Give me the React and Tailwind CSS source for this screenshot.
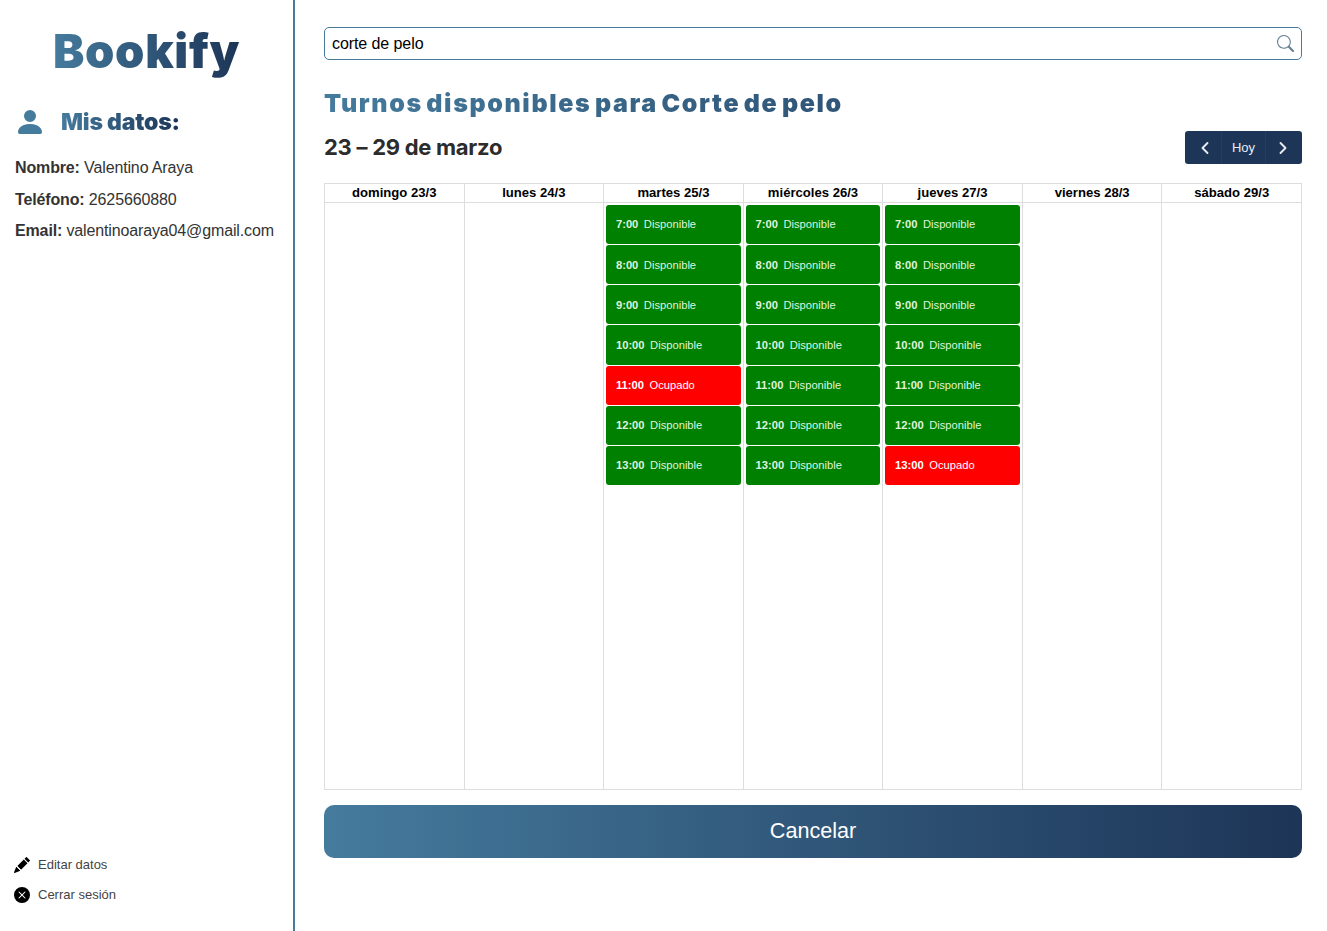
import { BsPersonFill, BsPencilFill, BsXCircleFill, BsSearch } from "react-icons/bs";
import { ChevronLeft, ChevronRight } from "lucide-react";

const DAYS = [
  { label: "domingo 23/3", slots: [] },
  { label: "lunes 24/3", slots: [] },
  { label: "martes 25/3", slots: [11] },
  { label: "miércoles 26/3", slots: [] },
  { label: "jueves 27/3", slots: [13] },
  { label: "viernes 28/3", slots: [] },
  { label: "sábado 29/3", slots: [] },
];
const OPEN_DAYS = ["martes 25/3", "miércoles 26/3", "jueves 27/3"];
const HOURS = [7, 8, 9, 10, 11, 12, 13];

const gradient = "bg-gradient-to-r from-[#457b9d] to-[#1d3557]";
const gradientText = `${gradient} bg-clip-text text-transparent`;

export default function App() {
  return (
    <div className="flex h-[931px] overflow-hidden bg-white font-['Liberation_Sans',sans-serif] text-[#333333]">
      <Sidebar />
      <main className="flex-1 pl-[29px] pr-[25px] pt-[27px]">
        <div className="flex h-[33px] items-center justify-between rounded-[5px] border border-[#457b9d] pl-[7px] pr-[7px]">
          <span className="text-[16px] tracking-[-0.08px] text-black">corte de pelo</span>
          <BsSearch className="h-[17px] w-[17px] text-[#64808f]" />
        </div>

        <h2 className={`mt-[26px] h-[34px] font-['Inter',sans-serif] text-[25px] font-black leading-[34px] tracking-[1.63px] [word-spacing:-3px] ${gradientText}`}>
          Turnos disponibles para Corte de pelo
        </h2>

        <div className="mt-[11px] flex h-[33px] items-center justify-between">
          <h3 className="font-['Inter',sans-serif] text-[22px] font-bold tracking-[-0.27px] text-[#2c2c2c]">
            23 – 29 de marzo
          </h3>
          <div className="flex h-[33px] w-[117px] items-center rounded-[3px] bg-[#1d3557] text-[13px] text-[#e8edf3]">
            <button className="flex h-full w-[37px] items-center justify-center border-r border-[#24405f] pl-[3px]">
              <ChevronLeft className="h-[20px] w-[20px]" strokeWidth={2.25} />
            </button>
            <button className="flex h-full flex-1 items-center justify-center border-r border-[#24405f]">
              Hoy
            </button>
            <button className="flex h-full w-[36px] items-center justify-center pr-[2px]">
              <ChevronRight className="h-[20px] w-[20px]" strokeWidth={2.25} />
            </button>
          </div>
        </div>

        <Calendar />

        <button className={`mt-[15px] h-[53px] w-full rounded-[10px] pb-px text-[21.6px] text-white ${gradient}`}>
          Cancelar
        </button>
      </main>
    </div>
  );
}

function Sidebar() {
  return (
    <aside className="flex w-[295px] shrink-0 flex-col justify-between border-r-2 border-[#457b9d] pb-[28px] pl-[15px] pr-[15px] pt-[21px]">
      <div>
        <div className="text-center">
          <h1 className={`inline-block font-['Inter',sans-serif] text-[47px] font-black leading-[60px] tracking-[0.7px] ${gradientText}`}>
            Bookify
          </h1>
        </div>
        <div className="mt-[23px] flex h-[36px] items-center">
          <BsPersonFill className="ml-[-1px] h-[32px] w-[32px] text-[#457b9d]" />
          <h2 className={`ml-[15px] inline-block font-['Inter',sans-serif] text-[23px] font-black tracking-[-0.2px] ${gradientText}`}>
            Mis datos:
          </h2>
        </div>
        <div className="mt-[19px] flex flex-col gap-[13px] text-[16px] leading-[18.5px] tracking-[-0.14px]">
          <p><b>Nombre:</b> Valentino Araya</p>
          <p><b>Teléfono:</b> 2625660880</p>
          <p><b>Email:</b> valentinoaraya04@gmail.com</p>
        </div>
      </div>
      <div className="ml-[-1px] flex flex-col gap-[14px] text-[13px] leading-[16px] text-[#444444]">
        <div className="flex items-center gap-[8px]">
          <BsPencilFill className="h-[16px] w-[16px] text-black" />
          <span>Editar datos</span>
        </div>
        <div className="flex items-center gap-[8px]">
          <BsXCircleFill className="h-[16px] w-[16px] text-black" />
          <span>Cerrar sesión</span>
        </div>
      </div>
    </aside>
  );
}

function Calendar() {
  return (
    <div className="mt-[19px] border-y border-r border-[#dddddd]">
      <div className="grid h-[19px] grid-cols-7 border-b border-[#dddddd]">
        {DAYS.map((d) => (
          <div
            key={d.label}
            className="border-l border-[#dddddd] text-center text-[13.1px] font-bold leading-[18px] text-black"
          >
            {d.label}
          </div>
        ))}
      </div>
      <div className="grid h-[586px] grid-cols-7">
        {DAYS.map((d) => (
          <div key={d.label} className="flex flex-col gap-px border-l border-[#dddddd] px-[2px] pt-[2px]">
            {OPEN_DAYS.includes(d.label) &&
              HOURS.map((h) => <Slot key={h} hour={h} busy={d.slots.includes(h)} />)}
          </div>
        ))}
      </div>
    </div>
  );
}

function Slot({ hour, busy }) {
  return (
    <div
      className={`flex h-[39.17px] items-center gap-[5.5px] rounded-[3px] pl-[9.8px] pt-[0.6px] text-[11.2px] ${
        busy ? "bg-[#ff0000] text-white" : "bg-[#008000] text-[#dff3df]"
      }`}
    >
      <b>{hour}:00</b>
      <span>{busy ? "Ocupado" : "Disponible"}</span>
    </div>
  );
}
